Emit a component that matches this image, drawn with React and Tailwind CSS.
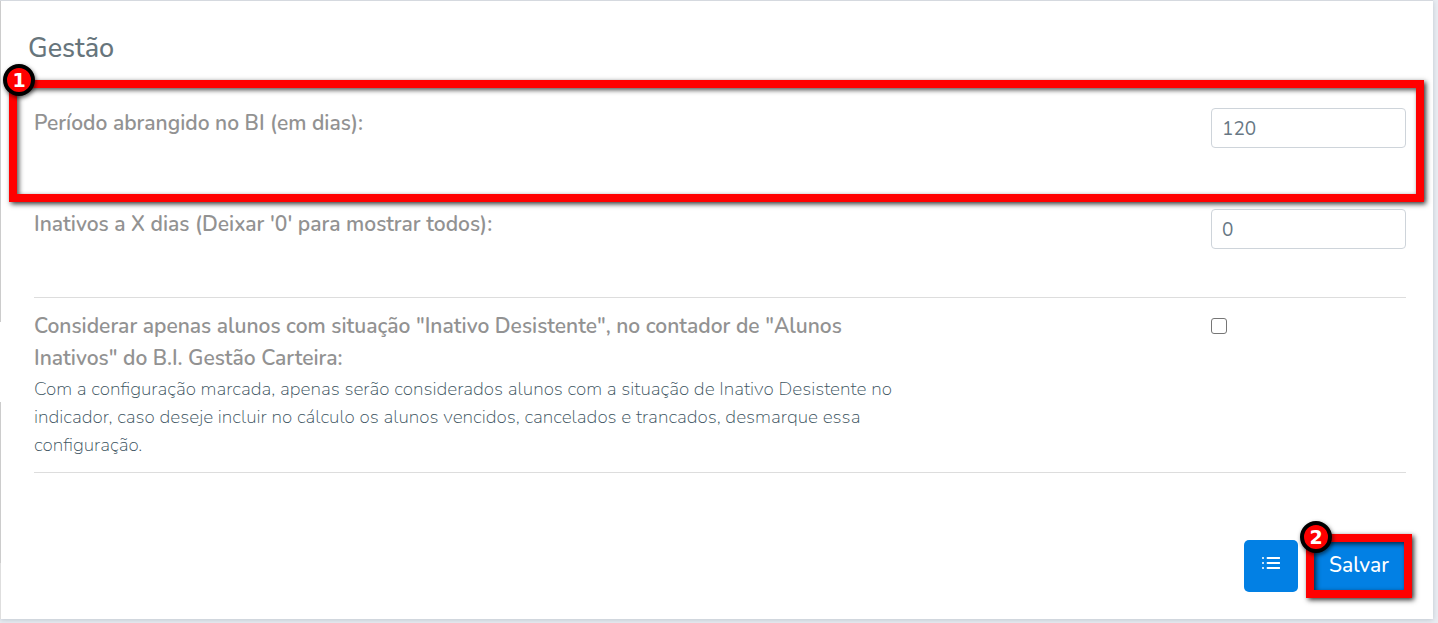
import React from "react";
import clsx from "clsx";

function StepMarker({ number, className, badgeClassName }) {
  return (
    <div
      className={clsx("pointer-events-none absolute border-8 border-[#ff0000] shadow-[2px_2px_5px_rgba(0,0,0,0.8),inset_2px_2px_5px_rgba(0,0,0,0.7)]", className)}
    >
      <span
        className={clsx("absolute -left-3.5 flex size-8 items-center justify-center rounded-full border-4 border-black bg-[#ff0000] font-['DejaVu_Sans',sans-serif] text-[19px] font-bold text-white shadow-[1px_2px_4px_rgba(0,0,0,0.6)]", badgeClassName)}
      >
        {number}
      </span>
    </div>
  );
}

function ListIcon() {
  return (
    <svg viewBox="0 0 18 14" className="h-3.5 w-[18px]" fill="none" stroke="currentColor" strokeLinecap="round">
      <path d="M5.5 2h12M5.5 7h12M5.5 12h12" strokeWidth="1.8" />
      <path d="M1 2h.01M1 7h.01M1 12h.01" strokeWidth="2" />
    </svg>
  );
}

function NumberSetting({ id, label, value, children }) {
  return (
    <div className="relative flex h-[101px] items-start justify-between">
      <label htmlFor={id} className="w-[63%] text-[21px] leading-8 font-semibold text-[#929292]">
        {label}
      </label>
      <input
        id={id}
        type="text"
        inputMode="numeric"
        defaultValue={value}
        className="mt-px h-10 w-[195px] rounded border border-[#ced4da] bg-white px-2.5 pt-px text-[19px] text-[#677784] outline-none"
      />
      {children}
    </div>
  );
}

export default function App() {
  return (
    <div className="bg-[#e9edf2] pr-[5px] pb-1 font-['Nunito','Lato',sans-serif]">
      <main className="flex border-t border-[#d5d9df] bg-white shadow-[0_1px_5px_rgba(100,110,130,0.3)]">
        {/* Left edge */}
        <div className="flex w-px flex-col">
          <div className="h-[321px] bg-[#cccccc]" />
          <div className="h-20" />
          <div className="h-[161px] bg-[#cccccc]" />
          <div className="flex-1 bg-[#dedede]" />
        </div>

        <form className="flex-1 pr-[27px] pb-[27px] pl-[33px]" onSubmit={(e) => e.preventDefault()}>
          <h1 className="-ml-1.5 pt-7 pb-[38px] text-[27px] leading-10 font-medium text-[#67757c]">Gestão</h1>

          {/* Settings */}
          <NumberSetting id="periodo" label="Período abrangido no BI (em dias):" value="120">
            <StepMarker number={1} className="-top-[27px] -right-[18px] -left-[25px] h-[122px]" badgeClassName="-top-6" />
          </NumberSetting>
          <NumberSetting
            id="inativos"
            label="Inativos a X dias (Deixar '0' para mostrar todos):"
            value="0"
          />

          <div className="-mt-3 flex items-start justify-between border-y border-[#dddddd] pt-3 pb-[13px]">
            <div className="w-[63%]">
              <label htmlFor="desistente" className="block text-[21px] leading-8 font-semibold text-[#929292]">
                Considerar apenas alunos com situação "Inativo Desistente", no contador de "Alunos
                Inativos" do B.I. Gestão Carteira:
              </label>
              <p id="desistente-help" className="pt-px text-[19px] leading-7 font-extralight text-[#3b5360]">
                Com a configuração marcada, apenas serão considerados alunos com a situação de
                Inativo Desistente no indicador, caso deseje incluir no cálculo os alunos vencidos,
                cancelados e trancados, desmarque essa configuração.
              </p>
            </div>
            <div className="flex w-[195px] pt-2">
              <input
                id="desistente"
                type="checkbox"
                aria-describedby="desistente-help"
                className="size-4 appearance-none rounded-[3px] border border-[#767676] bg-white checked:bg-[#0280e4]"
              />
            </div>
          </div>

          {/* Actions */}
          <div className="mt-[67px] flex justify-end gap-3.5">
            <button
              type="button"
              aria-label="Lista"
              className="flex h-13 w-[54px] items-center justify-center rounded-[5px] bg-[#0280e4] pb-1.5 text-white"
            >
              <ListIcon />
            </button>
            <div className="relative">
              <button
                type="submit"
                className="h-13 w-[94px] rounded-[5px] bg-[#0280e4] text-[21px] font-medium text-white"
              >
                Salvar
              </button>
              <StepMarker number={2} className="-inset-1.5" badgeClassName="-top-[21px]" />
            </div>
          </div>
        </form>
      </main>
    </div>
  );
}
